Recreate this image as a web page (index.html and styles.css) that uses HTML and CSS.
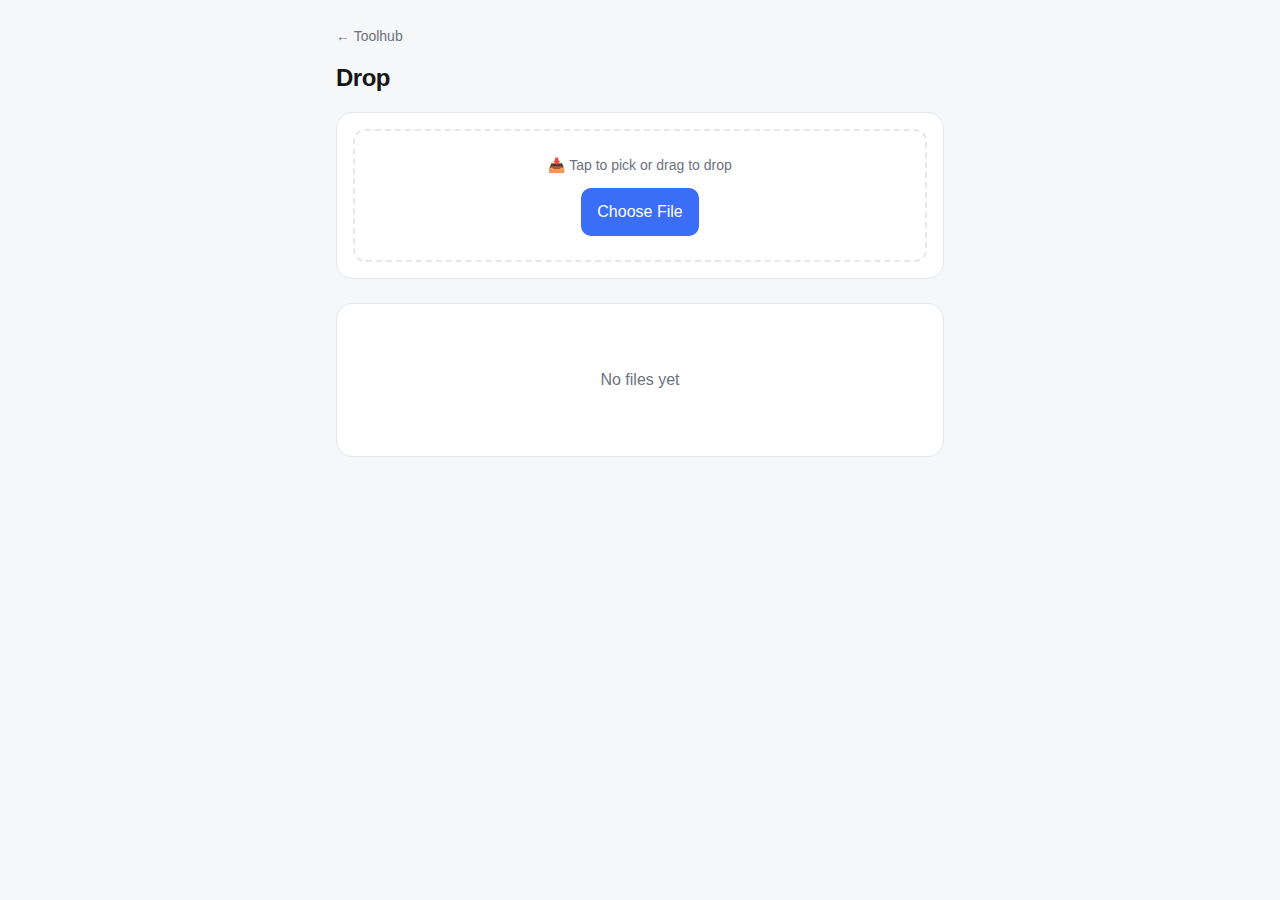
FILE: index.html
```html
<!DOCTYPE html>
<html lang="en">
<head>
    <meta charset="UTF-8">
    <meta name="viewport" content="width=device-width, initial-scale=1.0">
    <title>Drop</title>
    <link rel="stylesheet" href="styles.css">
</head>
<body>
    <div class="container">
        <a class="back-link" href="#">← Toolhub</a>
        <h1>Drop</h1>
        <div class="card">
            <div class="drop-zone">
                <p class="drop-hint"><span>📥</span><span>Tap to pick or drag to drop</span></p>
                <button class="btn" type="button">Choose File</button>
            </div>
        </div>
        <div class="card">
            <div class="empty">No files yet</div>
        </div>
    </div>
</body>
</html>
```

FILE: styles.css
```css
* {
    box-sizing: border-box;
}
body {
    margin: 0;
    background-color: #f6f7f9;
    color: #14151a;
    font-family: "Liberation Sans", Arial, sans-serif;
}
.container {
    width: 640px;
    margin: 0 auto;
    padding: 28px 16px;
}
.back-link {
    display: block;
    font-size: 14px;
    line-height: 16px;
    color: #6b7280;
    text-decoration: none;
}
h1 {
    margin: 20px 0 20px;
    font-size: 24px;
    line-height: 28px;
    font-weight: 700;
    letter-spacing: -0.5px;
}
.card {
    margin-bottom: 24px;
    padding: 16px;
    background-color: #fff;
    border: 1px solid #e5e7eb;
    border-radius: 16px;
}
.drop-zone {
    display: flex;
    flex-direction: column;
    align-items: center;
    gap: 14px;
    padding: 25px 16px 24px;
    border: 2px dashed #e5e7eb;
    border-radius: 12px;
}
.drop-hint {
    display: flex;
    gap: 4px;
    margin: 0;
    font-size: 14px;
    line-height: 18px;
    color: #6b7280;
}
.btn {
    height: 48px;
    padding: 0 16px;
    border: none;
    border-radius: 10px;
    background-color: #3b6ef6;
    color: #fff;
    font-family: inherit;
    font-size: 16px;
}
.empty {
    padding: 51px 0;
    font-size: 16px;
    line-height: 18px;
    text-align: center;
    color: #6b7280;
}
```
